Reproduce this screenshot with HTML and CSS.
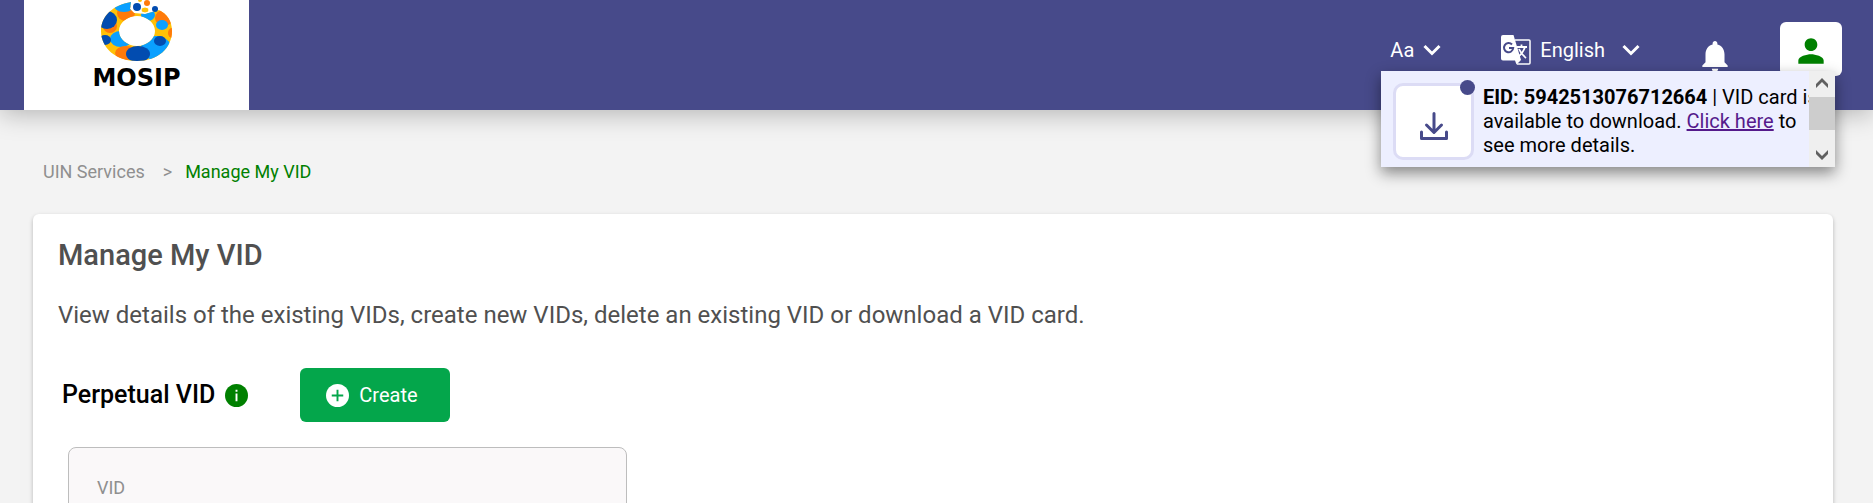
FILE: index.html
```html
<!DOCTYPE html>
<html lang="en">
<head>
<meta charset="utf-8">
<title>Manage My VID</title>
<link rel="stylesheet" href="styles.css">
</head>
<body>
<header class="topbar">
  <a class="brand" href="#">
    <svg class="brand-mark" viewBox="0 0 72 62" aria-hidden="true">
      <defs><clipPath id="ring"><path clip-rule="evenodd" d="M30 2C12 5 0 16 0 31C0 48 15 61 36 61C57 61 71 48 71 31C71 21 66 14 58 10L44 14L33 13L29 9ZM18 31C18 23 26 16 36 16C46 16 54 23 54 31C54 39 46 46 36 46C26 46 18 39 18 31Z"/></clipPath></defs>
      <g clip-path="url(#ring)">
        <path fill="#ffc107" d="M0 0h72v62H0z"/>
        <ellipse cx="9" cy="26" rx="7" ry="7" fill="#ff7a0a"/>
        <ellipse cx="25" cy="13" rx="9" ry="8" fill="#ff7a0a"/>
        <ellipse cx="23" cy="4" rx="11" ry="8" fill="#0aa0ff"/>
        <ellipse cx="6" cy="20" rx="10" ry="9" fill="#024cb0"/>
        <ellipse cx="20" cy="39" rx="11" ry="8" fill="#0aa0ff"/>
        <ellipse cx="4" cy="40" rx="6" ry="5" fill="#024cb0"/>
        <ellipse cx="25" cy="53" rx="11" ry="7" fill="#ff7a0a"/>
        <ellipse cx="55" cy="48" rx="15" ry="12" fill="#0aa0ff"/>
        <ellipse cx="37" cy="54" rx="12" ry="8" fill="#024cb0"/>
        <ellipse cx="59" cy="41" rx="6" ry="5" fill="#024cb0"/>
        <ellipse cx="63" cy="18" rx="9" ry="8" fill="#ff7a0a"/>
        <ellipse cx="61" cy="25" rx="6" ry="5" fill="#0aa0ff"/>
        <ellipse cx="47" cy="15" rx="7" ry="6" fill="#0aa0ff"/>
        <ellipse cx="71" cy="33" rx="4" ry="5" fill="#ff7a0a"/>
      </g>
      <ellipse cx="44" cy="10" rx="4" ry="3" fill="#ffc107" stroke="#fff" stroke-width="1"/>
      <ellipse cx="36" cy="7" rx="4" ry="4" fill="#024cb0"/>
      <ellipse cx="46" cy="3" rx="3" ry="3" fill="#ff7a0a"/>
      <ellipse cx="54" cy="9" rx="3" ry="3" fill="#024cb0"/>
      <ellipse cx="39" cy="0" rx="2" ry="2" fill="#ffc107"/>
    </svg>
    <span class="brand-name">MOSIP</span>
  </a>
  <nav class="tools">
    <button class="tool" type="button">Aa
      <svg class="chevron" viewBox="0 0 18 12" aria-hidden="true"><path d="M1.500 2L9 9.500L16.500 2" /></svg>
    </button>
    <button class="tool tool-language" type="button">
      <svg class="translate" viewBox="0 0 30 30" aria-hidden="true">
        <path fill="#fff" d="M2 0H12.500L20 25L15.500 29.500L14 25.500H2Q0 25.500 0 23.500V2Q0 0 2 0Z"/>
        <path fill="none" stroke="#fff" stroke-width="1.500" d="M14 5H28Q29 5 29 6V28Q29 29 28 29H16"/>
        <path fill="none" stroke="#474a8a" stroke-width="2" d="M11 9.500A4.600 4.600 0 1 0 12.200 13H8"/>
        <path fill="none" stroke="#fff" stroke-width="1.800" d="M16 12H26M20.500 9.500V12M24 12Q22 18 17 22M18 14Q20 19 25 23"/>
      </svg>
      <span class="language-name">English</span>
      <svg class="chevron" viewBox="0 0 18 12" aria-hidden="true"><path d="M1.500 2L9 9.500L16.500 2" /></svg>
    </button>
    <button class="tool tool-bell" type="button" aria-label="Notifications">
      <svg class="icon-large" viewBox="0 0 24 24" aria-hidden="true"><path fill="#fff" d="M12 22c1.100 0 2-.9 2-2h-4c0 1.100.89 2 2 2zm6-6v-5c0-3.070-1.640-5.640-4.500-6.320V4c0-.83-.67-1.500-1.500-1.500s-1.500.67-1.500 1.500v.68C7.630 5.360 6 7.920 6 11v5l-2 2v1h16v-1l-2-2z"/></svg>
    </button>
    <button class="tool-user" type="button" aria-label="Account">
      <svg class="icon-large" viewBox="0 0 24 24" aria-hidden="true"><path fill="#008000" d="M12 12c2.210 0 4-1.790 4-4s-1.790-4-4-4-4 1.790-4 4 1.790 4 4 4zm0 2c-2.670 0-8 1.340-8 4v2h16v-2c0-2.660-5.330-4-8-4z"/></svg>
    </button>
  </nav>
  <section class="notice" aria-label="Notifications">
    <div class="notice-icon">
      <svg class="download" viewBox="0 0 28 28" aria-hidden="true"><path d="M14 1.500V20M6.500 13L14 20.500L21.500 13M1.500 20V26.500H26.500V20"/></svg>
      <span class="unread"></span>
    </div>
    <p class="notice-text"><b>EID: 5942513076712664</b> | VID card is available to download. <a class="notice-link" href="#">Click here</a> to see more details.</p>
    <div class="scroller" aria-hidden="true">
      <svg class="scroll-arrow" viewBox="0 0 12 10"><path d="M0 6L6 0L12 6V10L6 4L0 10Z"/></svg>
      <span class="scroll-thumb"></span>
      <svg class="scroll-arrow" viewBox="0 0 12 10"><path d="M0 0L6 6L12 0V4L6 10L0 4Z"/></svg>
    </div>
  </section>
</header>
<main class="page">
  <nav class="crumbs" aria-label="Breadcrumb">
    <a class="crumb" href="#">UIN Services</a>
    <span class="crumb-sep">&gt;</span>
    <span class="crumb-current">Manage My VID</span>
  </nav>
  <section class="panel">
    <h1 class="title">Manage My VID</h1>
    <p class="lead">View details of the existing VIDs, create new VIDs, delete an existing VID or download a VID card.</p>
    <div class="group-head">
      <h2 class="group-title">Perpetual VID</h2>
      <svg class="info" viewBox="0 0 24 24" aria-hidden="true"><circle cx="12" cy="12" r="12" fill="#008000"/><path fill="#fff" d="M11 6h2v2h-2zM11 10h2v8h-2z"/></svg>
      <button class="create" type="button">
        <svg class="plus" viewBox="0 0 24 24" aria-hidden="true"><circle cx="12" cy="12" r="12" fill="#fff"/><path stroke="#04a64b" stroke-width="2" d="M12 6V18M6 12H18"/></svg>
        Create
      </button>
    </div>
    <article class="vid-card"><span class="vid-label">VID</span></article>
  </section>
</main>
</body>
</html>
```
FILE: styles.css
```css
* { box-sizing: border-box; }
body {
  margin: 0;
  height: 100vh;
  overflow: hidden;
  background: #f3f3f3;
  color: #000;
  font-family: Roboto, "Liberation Sans", sans-serif;
}
button { font: inherit; border: 0; padding: 0; background: none; cursor: pointer; }
h1, h2, p { margin: 0; }
svg { display: block; flex: none; }

.topbar {
  position: relative;
  display: flex;
  justify-content: space-between;
  height: 110px;
  padding: 0 31px 0 24px;
  background: #474a8a;
  box-shadow: 0 4px 24px rgba(0, 0, 0, 0.26);
}
.brand {
  display: flex;
  flex-direction: column;
  align-items: center;
  width: 225px;
  background: #fff;
  color: #000;
  text-decoration: none;
}
.brand-mark { width: 72px; height: 62px; }
.brand-name { margin-top: 4px; font: bold 24px/24px "DejaVu Sans", sans-serif; }

.tools { display: flex; align-items: flex-start; padding-top: 22px; }
.tool {
  display: flex;
  align-items: center;
  gap: 9px;
  height: 56px;
  color: #fff;
  font-size: 20px;
}
.chevron { width: 18px; height: 12px; fill: none; stroke: #fff; stroke-width: 3; }
.tool-language { margin-left: 60px; }
.translate { width: 30px; height: 30px; }
.language-name { margin-right: 8px; }
.tool-bell { margin: 6px 46px 0 56px; }
.icon-large { width: 38px; height: 38px; }
.tool-user {
  display: flex;
  justify-content: center;
  align-items: center;
  width: 62px;
  height: 54px;
  padding-top: 4px;
  border-radius: 6px;
  background: #fff;
}

.notice {
  position: absolute;
  top: 71px;
  right: 38px;
  display: flex;
  width: 454px;
  height: 96px;
  padding: 12px 12px 0;
  overflow: hidden;
  background: #edefff;
  box-shadow: 0 6px 14px rgba(0, 0, 0, 0.45);
}
.notice-icon {
  position: relative;
  display: flex;
  flex: none;
  justify-content: center;
  align-items: center;
  width: 81px;
  height: 77px;
  padding-top: 8px;
  border: 3px solid #dcdcf5;
  border-radius: 10px;
  background: #fff;
}
.unread {
  position: absolute;
  top: -6px;
  right: -4px;
  width: 15px;
  height: 15px;
  border-radius: 50%;
  background: #474a8a;
}
.download {
  width: 28px;
  height: 28px;
  fill: none;
  stroke: #474a8a;
  stroke-width: 3;
  stroke-linecap: round;
  stroke-linejoin: round;
}
.notice-text { flex: 1; margin: 2px 0 0 9px; font-size: 20px; line-height: 24px; }
.notice-link { color: #551a8b; }
.scroller {
  position: absolute;
  top: 0;
  right: 0;
  bottom: 0;
  display: flex;
  flex-direction: column;
  align-items: center;
  width: 26px;
  padding: 7px 0;
  background: #efefef;
}
.scroll-arrow { width: 12px; height: 10px; fill: #606060; }
.scroll-thumb { width: 26px; height: 33px; margin: 9px 0 20px; background: #cdcdcd; }

.page { padding: 48px 40px 0 33px; }
.crumbs { display: flex; align-items: center; padding-left: 10px; font-size: 18px; line-height: 28px; }
.crumb { color: #8f8f8f; text-decoration: none; }
.crumb-sep { margin: 0 13px 0 18px; color: #8f8f8f; }
.crumb-current { color: #008000; }

.panel {
  min-height: 400px;
  margin-top: 28px;
  padding: 24px 24px 0 25px;
  border-radius: 6px;
  background: #fff;
  box-shadow: 0 2px 4px rgba(0, 0, 0, 0.25);
}
.title { color: #505050; font-size: 29px; font-weight: 500; line-height: 34px; }
.lead { margin-top: 28px; color: #505050; font-size: 24px; line-height: 30px; }
.group-head { display: flex; align-items: center; margin-top: 38px; padding-left: 4px; }
.group-title { font-size: 25px; font-weight: 500; line-height: 30px; }
.info { width: 23px; height: 23px; margin-left: 10px; }
.create {
  display: flex;
  align-items: center;
  gap: 10px;
  width: 150px;
  height: 54px;
  margin-left: 52px;
  padding-left: 26px;
  border-radius: 6px;
  background: #04a64b;
  color: #fff;
  font-size: 20px;
}
.plus { width: 23px; height: 23px; }
.vid-card {
  width: 559px;
  min-height: 200px;
  margin: 25px 0 0 10px;
  padding: 26px 28px;
  border: 1px solid #bdbdbd;
  border-radius: 8px;
  background: #faf8f9;
}
.vid-label { color: #8f8f8f; font-size: 18px; line-height: 28px; }
```
